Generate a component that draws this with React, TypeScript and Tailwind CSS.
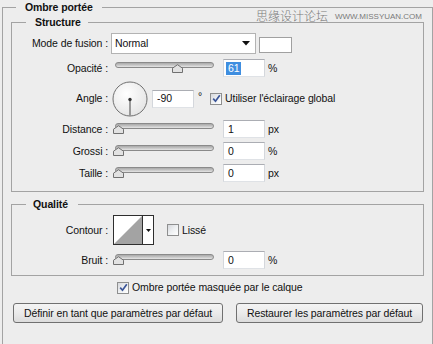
import React from "react";

function Check({ checked }: { checked?: boolean }) {
  return (
    <div className="flex h-[12px] w-[12px] shrink-0 items-center justify-center border border-[#8e8f8f] bg-gradient-to-br from-[#d6d8dc] via-[#eef0f2] to-[#ffffff]">
      {checked && (
        <svg width="9" height="9" viewBox="0 0 9 9">
          <path d="M1.2 4.6 L3.5 7.2 L7.8 1.2" fill="none" stroke="#3b5598" strokeWidth="1.7" />
        </svg>
      )}
    </div>
  );
}

function Slider({ pos }: { pos: number }) {
  return (
    <div className="relative ml-[5px] h-[18px] w-[102px] shrink-0">
      <div className="ml-[2px] mr-[1px] mt-[3px] h-[6px] rounded-full border border-[#8a8a8a] bg-gradient-to-b from-[#a9a9a9] via-[#c4c4c4] to-[#e6e6e6]" />
      <svg className="absolute top-[5px]" style={{ left: `${pos}px` }} width="11" height="9" viewBox="0 0 11 9">
        <path d="M0.5 8.5 V4.2 L5.5 0.7 L10.5 4.2 V8.5 Z" fill="#e2e2e2" stroke="#707070" strokeWidth="1" />
      </svg>
    </div>
  );
}

function Field({ value, selected }: { value: string; selected?: boolean }) {
  return (
    <div className="ml-[8px] flex h-[18px] w-[42px] shrink-0 items-center border border-[#abadb3] border-l-[#d4d7dc] border-r-[#d4d7dc] border-b-[#dfe2e6] bg-white pl-[2px]">
      <span className={selected ? "bg-[#3f8ee0] px-[2px] text-white" : "px-[2px]"}>{value}</span>
    </div>
  );
}

function Label({ children }: { children: React.ReactNode }) {
  return <div className="w-[96px] shrink-0 text-right">{children}</div>;
}

function SliderRow({ label, pos, value, unit, selected, mt }: { label: string; pos: number; value: string; unit: string; selected?: boolean; mt: string }) {
  return (
    <div className={`flex h-[18px] items-center ${mt}`}>
      <Label>{label}</Label>
      <Slider pos={pos} />
      <Field value={value} selected={selected} />
      <span className="ml-[3px]">{unit}</span>
    </div>
  );
}

export default function App() {
  return (
    <div className="relative h-[344px] w-[433px] overflow-hidden bg-[#ededed] font-['Liberation_Sans',Arial,sans-serif] text-[10.5px] leading-[13px] tracking-[-0.1px] text-[#111]">
      <fieldset className="ml-[2px] h-[380px] w-[431px] border border-[#a3a3a3]">
        <legend className="ml-[13px] w-[86px] pl-[9px] font-bold leading-[14px]">Ombre portée</legend>

        <fieldset className="ml-[8px] mt-[1px] w-[413px] border border-[#a3a3a3] pb-[9px]">
          <legend className="ml-[14px] w-[62px] pl-[9px] font-bold leading-[14px]">Structure</legend>

          <div className="mt-[4px] flex h-[21px] items-center">
            <Label>Mode de fusion :</Label>
            <div className="ml-[3px] flex h-[21px] w-[145px] items-center justify-between border border-[#b3b3b3] bg-white pl-[3px] pr-[5px]">
              <span>Normal</span>
              <svg width="8" height="5" viewBox="0 0 8 5">
                <path d="M0 0 H8 L4 4.5 Z" fill="#111" />
              </svg>
            </div>
            <div className="ml-[3px] mt-[2px] h-[16px] w-[33px] border border-[#a0a0a0] bg-white" />
          </div>

          <SliderRow mt="mt-[5px]" label="Opacité :" pos={59} value="61" unit="%" selected />

          <div className="mt-[4px] flex h-[35px] items-center">
            <Label>Angle :</Label>
            <svg className="ml-[4px] shrink-0" width="36" height="36" viewBox="0 0 36 36">
              <defs>
                <radialGradient id="dial" cx="40%" cy="35%" r="70%">
                  <stop offset="0" stopColor="#ffffff" />
                  <stop offset="1" stopColor="#e4e4e4" />
                </radialGradient>
              </defs>
              <circle cx="18" cy="18" r="17" fill="url(#dial)" stroke="#707070" strokeWidth="1" />
              <line x1="18" y1="18" x2="18" y2="34.5" stroke="#7c7c7c" strokeWidth="1.5" />
              <circle cx="18" cy="18.5" r="1.7" fill="#333" />
            </svg>
            <div className="ml-[-4px]">
              <Field value="-90" />
            </div>
            <span className="ml-[4px] mb-[4px]">°</span>
            <div className="ml-[8px]">
              <Check checked />
            </div>
            <span className="ml-[3px]">Utiliser l'éclairage global</span>
          </div>

          <SliderRow mt="mt-[4px]" label="Distance :" pos={0} value="1" unit="px" />
          <SliderRow mt="mt-[4px]" label="Grossi :" pos={0} value="0" unit="%" />
          <SliderRow mt="mt-[4px]" label="Taille :" pos={0} value="0" unit="px" />
        </fieldset>

        <fieldset className="ml-[8px] mt-[5px] w-[413px] border border-[#a3a3a3] pb-[6px]">
          <legend className="ml-[14px] w-[52px] pl-[7px] font-bold leading-[14px]">Qualité</legend>

          <div className="mt-[4px] flex h-[30px] items-center">
            <Label>Contour :</Label>
            <div className="ml-[5px] flex h-[30px] w-[41px] shrink-0 border border-[#2e2e2e] bg-white">
              <svg width="28" height="28" viewBox="0 0 28 28">
                <path d="M0 28 L28 0 V28 Z" fill="#a3a3a3" />
              </svg>
              <div className="flex flex-1 items-center justify-center border-l border-[#2e2e2e]">
                <svg width="5" height="3" viewBox="0 0 5 3">
                  <path d="M0 0 H5 L2.5 3 Z" fill="#111" />
                </svg>
              </div>
            </div>
            <div className="ml-[13px]">
              <Check />
            </div>
            <span className="ml-[3px]">Lissé</span>
          </div>

          <SliderRow mt="mt-[6px]" label="Bruit :" pos={0} value="0" unit="%" />
        </fieldset>

        <div className="ml-[114px] mt-[5px] flex h-[13px] items-center">
          <Check checked />
          <span className="ml-[3px]">Ombre portée masquée par le calque</span>
        </div>

        <div className="ml-[10px] mt-[9px] flex">
          <button className="h-[20px] w-[210px] rounded-[3px] border border-[#707070] bg-gradient-to-b from-[#f4f4f4] via-[#ebebeb] to-[#dcdcdc] text-center">
            Définir en tant que paramètres par défaut
          </button>
          <button className="ml-[13px] h-[20px] w-[187px] rounded-[3px] border border-[#707070] bg-gradient-to-b from-[#f4f4f4] via-[#ebebeb] to-[#dcdcdc] text-center">
            Restaurer les paramètres par défaut
          </button>
        </div>
      </fieldset>

      <div className="absolute right-[11px] top-[9px] flex items-end bg-[#ededed] tracking-normal text-[#7a7a7a]">
        <span className="font-['Noto_Sans_CJK_SC',sans-serif] text-[12px] leading-[13px] font-light">思缘设计论坛</span>
        <span className="mb-[1px] ml-[7px] text-[8px] leading-[9px]">WWW.MISSYUAN.COM</span>
      </div>
    </div>
  );
}
